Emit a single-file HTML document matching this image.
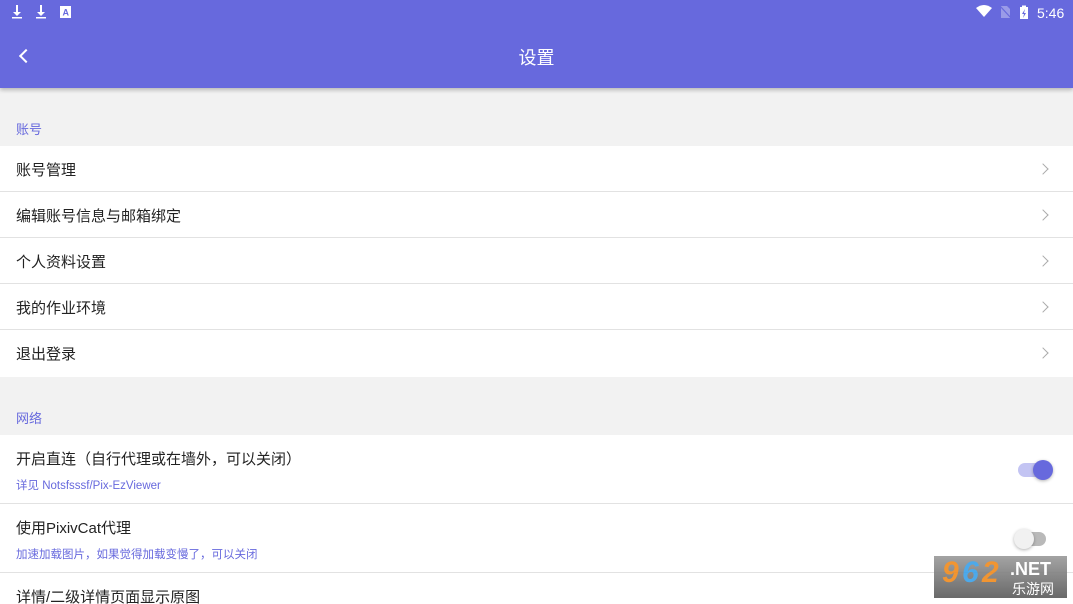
<!DOCTYPE html>
<html><head><meta charset="utf-8"><style>
*{margin:0;padding:0;box-sizing:border-box}
html,body{width:1073px;height:604px;overflow:hidden}
body{background:#f2f2f2;font-family:"Liberation Sans","Noto Sans CJK SC",sans-serif;position:relative}
.bar{position:absolute;left:0;top:0;width:1073px;height:88px;background:#6769dd;box-shadow:0 2px 4px rgba(0,0,0,.25);z-index:2}
.title{position:absolute;left:0;width:1073px;top:44px;text-align:center;color:#fff;font-size:18px}
.sec{position:absolute;left:16px;color:#6769dd;font-size:13px}
.rows{position:absolute;left:0;width:1073px;background:#fff;overflow:hidden}
.row{height:46px;border-bottom:1px solid #e2e2e2;position:relative;font-size:15px;color:#222;padding:13px 16px}
.row:last-child{border-bottom:none}
.chev{position:absolute;right:26px;top:19px;width:8px;height:8px;border-right:1.5px solid #aaa;border-top:1.5px solid #aaa;transform:rotate(45deg)}
.r2{height:69px;border-bottom:1px solid #e2e2e2;position:relative;padding:13px 16px}
.r2 .t{font-size:15px;color:#222}
.r2 .s{font-size:11.5px;color:#6769dd;margin-top:8px}
.sw{position:absolute;right:27px;width:28px;height:14px;border-radius:7px}
.knob{position:absolute;width:20px;height:20px;border-radius:50%;top:-3px;box-shadow:0 1px 3px rgba(0,0,0,.3)}
</style></head><body>
<div class="bar">
<svg style="position:absolute;left:10px;top:4px" width="70" height="16" viewBox="0 0 70 16" fill="#fff">
<path d="M6 1h2v7h3l-4 4-4-4h3z"/><rect x="2" y="13" width="10" height="1.5"/>
<path d="M30 1h2v7h3l-4 4-4-4h3z"/><rect x="26" y="13" width="10" height="1.5"/>
<rect x="50" y="2" width="11" height="12"/><text x="52.5" y="11.5" font-size="9" fill="#6769dd" font-family="Liberation Sans" font-weight="bold">A</text>
</svg>
<svg style="position:absolute;left:975px;top:4px" width="60" height="16" viewBox="0 0 60 16">
<path d="M1 4q8-6 16 0l-8 9z" fill="#fff"/>
<path d="M26 2h6l3 3v9h-9z" fill="#9a9be8"/><path d="M25 2l11 12" stroke="#6769dd" stroke-width="1.2"/>
<rect x="45" y="3" width="8" height="12" fill="#fff"/><rect x="47" y="1.5" width="4" height="2" fill="#fff"/><path d="M50 5l-3 5h2l-1 4 3-5h-2z" fill="#6769dd"/>
</svg>
<div style="position:absolute;left:1037px;top:5px;color:#fff;font-size:14px">5:46</div>
<div style="position:absolute;left:21px;top:51px;width:10px;height:10px;border-left:2px solid #fff;border-bottom:2px solid #fff;transform:rotate(45deg)"></div>
<div class="title">设置</div>
</div>
<div class="sec" style="top:119px">账号</div>
<div class="rows" style="top:146px;height:231px">
<div class="row">账号管理<div class="chev"></div></div>
<div class="row">编辑账号信息与邮箱绑定<div class="chev"></div></div>
<div class="row">个人资料设置<div class="chev"></div></div>
<div class="row">我的作业环境<div class="chev"></div></div>
<div class="row" style="height:47px">退出登录<div class="chev"></div></div>
</div>
<div class="sec" style="top:408px">网络</div>
<div class="rows" style="top:435px;height:169px">
<div class="r2"><div class="t">开启直连（自行代理或在墙外，可以关闭）</div><div class="s">详见 Notsfsssf/Pix-EzViewer</div>
<div class="sw" style="top:28px;background:#c3c4f3"><div class="knob" style="right:-7px;background:#6769dd"></div></div></div>
<div class="r2"><div class="t">使用PixivCat代理</div><div class="s">加速加载图片，如果觉得加载变慢了，可以关闭</div>
<div class="sw" style="top:28px;background:#b9b9b9"><div class="knob" style="left:-4px;background:#f1f1f1"></div></div></div>
<div class="r2" style="border:none;height:31px;overflow:hidden"><div class="t">详情/二级详情页面显示原图</div></div>
</div>
<div style="position:absolute;left:934px;top:556px;width:133px;height:42px;background:linear-gradient(#9a9a9a,#5a5a5a);opacity:.9">
<span style="position:absolute;left:8px;top:0;font:italic bold 30px 'Liberation Sans';color:#f08a1c">9</span><span style="position:absolute;left:28px;top:0;font:italic bold 30px 'Liberation Sans';color:#3aa0e8">6</span><span style="position:absolute;left:48px;top:0;font:italic bold 30px 'Liberation Sans';color:#f08a1c">2</span>
<span style="position:absolute;left:76px;top:3px;font:bold 18px 'Liberation Sans';color:#fff">.NET</span>
<span style="position:absolute;left:78px;top:23px;font-size:14px;color:#fff">乐游网</span></div>
</body></html>
